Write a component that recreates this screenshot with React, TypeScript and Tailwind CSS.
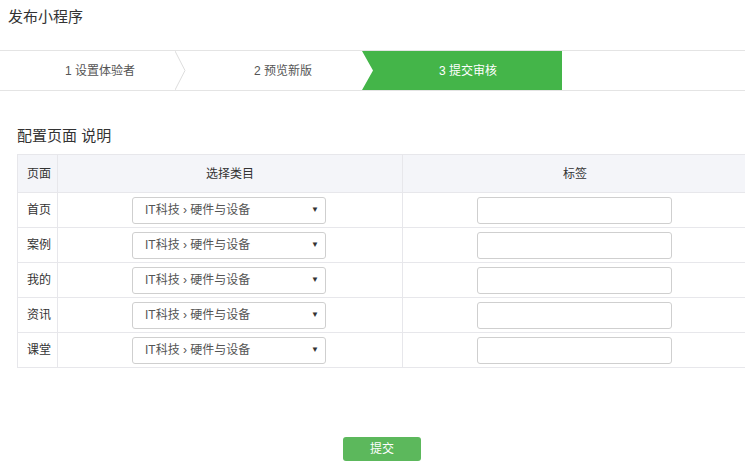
const rows = ["首页", "案例", "我的", "资讯", "课堂"];

const font = "font-['Liberation_Sans','Noto_Sans_CJK_SC',sans-serif]";

function Chevron() {
  return (
    <svg className="absolute right-[-10px] top-0 z-10 h-full w-[11px]" viewBox="0 0 11 40" preserveAspectRatio="none">
      <polygon points="0,0 10,20 0,40" fill="#fff" />
      <polyline points="0,0 10,20 0,40" fill="none" stroke="#dcdcdc" strokeWidth="1" />
    </svg>
  );
}

function FakeSelect() {
  return (
    <div className="mx-auto flex h-[27px] w-[194px] items-center justify-between rounded-[3px] border border-[#cfcfcf] bg-white pl-[12px] pr-[6px] text-[12px] text-[#555]">
      <span>IT科技 › 硬件与设备</span>
      <span className="text-[8px] text-[#333]">▼</span>
    </div>
  );
}

export default function App() {
  return (
    <div className={`h-[471px] w-[745px] overflow-hidden bg-white ${font} text-[#333]`}>
      <h1 className="px-[8px] pt-[6px] text-[15px] leading-[22px]">发布小程序</h1>

      <div className="mt-[22px] flex h-[41px] border-y border-[#e4e4e4] text-[12px] text-[#555]">
        <div className="relative flex w-[176px] items-center justify-center">
          <span className="pl-[24px]">1 设置体验者</span>
          <Chevron />
        </div>
        <div className="relative flex w-[186px] items-center justify-center">
          <span className="pl-[28px]">2 预览新版</span>
        </div>
        <div className="flex w-[200px] items-center justify-center bg-[#44b549] text-white [clip-path:polygon(0_0,100%_0,100%_100%,0_100%,11px_50%)]">
          <span className="pl-[12px]">3 提交审核</span>
        </div>
        <div className="flex-1" />
      </div>

      <div className="pl-[17px]">
        <h2 className="mt-[35px] text-[15px] leading-[20px]">配置页面 说明</h2>
        <div className="mt-[8px] w-[760px] text-[12px]">
          <div className="grid h-[39px] grid-cols-[40px_345px_1fr] border-y border-[#e7e7eb] bg-[#f4f5f9]">
            <div className="flex items-center border-l border-[#e7e7eb] pl-[9px]">页面</div>
            <div className="flex items-center justify-center border-l border-[#e7e7eb]">选择类目</div>
            <div className="flex items-center justify-center border-l border-[#e7e7eb] pr-[30px]">标签</div>
          </div>
          {rows.map((r) => (
            <div key={r} className="grid h-[35px] grid-cols-[40px_345px_1fr] border-b border-[#e7e7eb]">
              <div className="flex items-center border-l border-[#e7e7eb] pl-[9px]">{r}</div>
              <div className="flex items-center justify-center border-l border-[#e7e7eb] pr-[2px]">
                <FakeSelect />
              </div>
              <div className="flex items-center border-l border-[#e7e7eb] pl-[74px]">
                <div className="h-[27px] w-[195px] rounded-[3px] border border-[#cfcfcf] bg-white" />
              </div>
            </div>
          ))}
        </div>
      </div>

      <div className="mt-[69px] flex justify-center pl-[19px]">
        <button className="h-[24px] w-[78px] rounded-[3px] bg-[#5cb85c] text-[12px] text-white">提交</button>
      </div>
    </div>
  );
}
